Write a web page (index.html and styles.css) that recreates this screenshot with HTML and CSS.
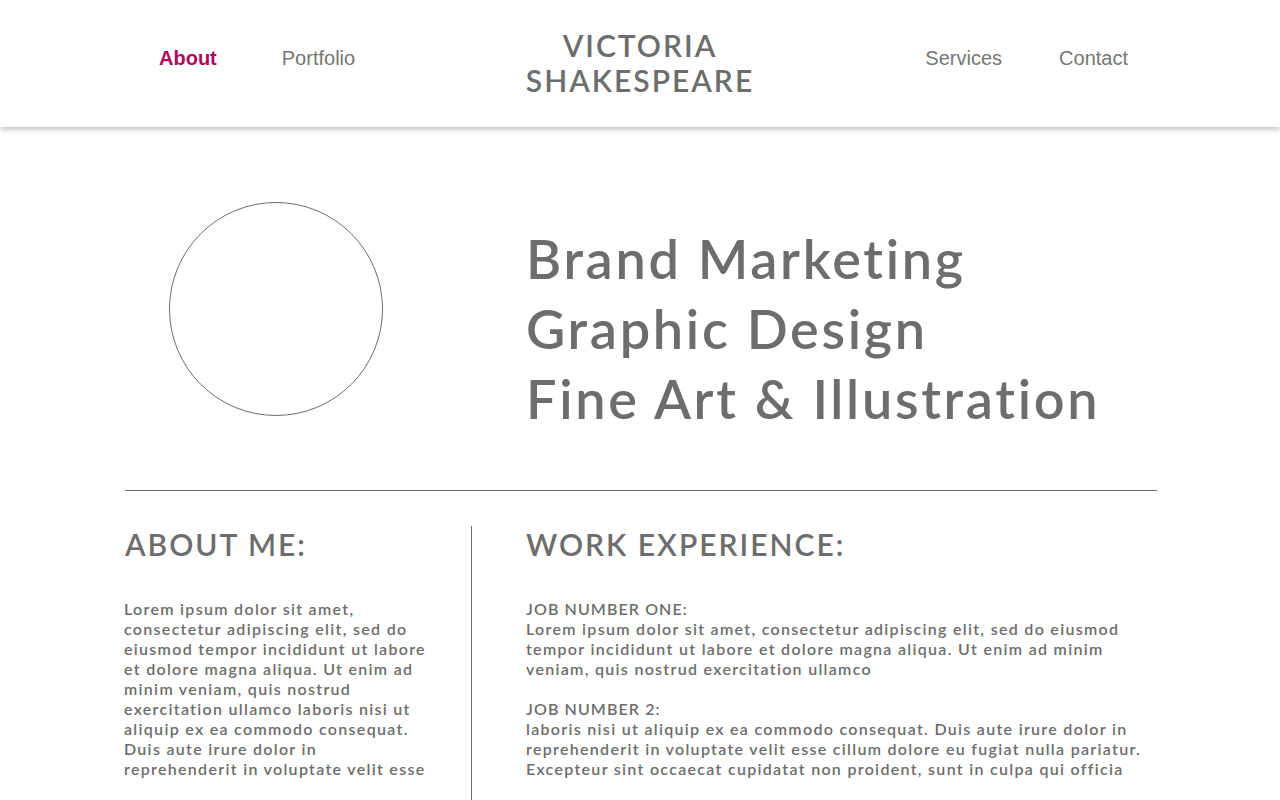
FILE: index.html
```html
<!DOCTYPE html>
<html lang="en">
<head>
<meta charset="utf-8">
<title>Victoria Shakespeare – About</title>
<link rel="stylesheet" href="styles.css">
</head>
<body>
<header class="site-header">
  <nav class="nav nav-left">
    <a class="nav-link active" href="#">About</a>
    <a class="nav-link" href="#">Portfolio</a>
  </nav>
  <div class="logo">VICTORIA<br>SHAKESPEARE</div>
  <nav class="nav nav-right">
    <a class="nav-link" href="#">Services</a>
    <a class="nav-link" href="#">Contact</a>
  </nav>
</header>
<main class="content">
  <section class="hero">
    <div class="hero-photo"><div class="avatar"></div></div>
    <h1 class="hero-title">Brand Marketing<br>Graphic Design<br>Fine Art &amp; Illustration</h1>
  </section>
  <hr class="rule">
  <section class="details">
    <div class="col col-about">
      <h2 class="section-title">ABOUT ME:</h2>
      <p class="body-text">Lorem ipsum dolor sit amet, consectetur adipiscing elit, sed do eiusmod tempor incididunt ut labore et dolore magna aliqua. Ut enim ad minim veniam, quis nostrud exercitation ullamco laboris nisi ut aliquip ex ea commodo consequat. Duis aute irure dolor in reprehenderit in voluptate velit esse</p>
    </div>
    <div class="col col-work">
      <h2 class="section-title">WORK EXPERIENCE:</h2>
      <div class="job">
        <h3 class="job-title">JOB NUMBER ONE:</h3>
        <p class="body-text">Lorem ipsum dolor sit amet, consectetur adipiscing elit, sed do eiusmod tempor incididunt ut labore et dolore magna aliqua. Ut enim ad minim veniam, quis nostrud exercitation ullamco</p>
      </div>
      <div class="job">
        <h3 class="job-title">JOB NUMBER 2:</h3>
        <p class="body-text">laboris nisi ut aliquip ex ea commodo consequat. Duis aute irure dolor in reprehenderit in voluptate velit esse cillum dolore eu fugiat nulla pariatur. Excepteur sint occaecat cupidatat non proident, sunt in culpa qui officia</p>
      </div>
    </div>
  </section>
</main>
</body>
</html>
```

FILE: styles.css
```css
* { box-sizing: border-box; }
html, body { margin: 0; padding: 0; }
body {
  background: #ffffff;
  color: #6d6d6d;
  font-family: "Lato", "Open Sans", sans-serif;
  overflow: hidden;
  height: 800px;
}

.site-header {
  height: 127px;
  background: #fff;
  box-shadow: 0 2px 6px rgba(0, 0, 0, 0.28);
  display: grid;
  grid-template-columns: 1fr auto 1fr;
  align-items: center;
  position: relative;
  z-index: 2;
}
.nav {
  display: flex;
  align-items: center;
  gap: 65px;
  padding-bottom: 10px;
}
.nav-left { padding-left: 159px; }
.nav-right { justify-content: flex-end; padding-right: 152px; gap: 57px; }
.nav-link {
  font-family: "Liberation Sans", Arial, sans-serif;
  font-size: 20px;
  color: #767676;
  text-decoration: none;
}
.nav-link.active {
  color: #b0085a;
  font-weight: 700;
}
.logo {
  text-align: center;
  font-size: 30px;
  line-height: 35px;
  letter-spacing: 2px;
  font-weight: 600;
  color: #6d6d6d;
  padding-bottom: 1px;
}

.content {
  padding: 0 123px 0 125px;
}
.hero {
  display: flex;
  padding-top: 75px;
  height: 363px;
}
.hero-photo {
  width: 401px;
  padding-left: 44px;
}
.avatar {
  width: 214px;
  height: 214px;
  border: 1px solid #6d6d6d;
  border-radius: 50%;
}
.hero-title {
  margin: 22px 0 0;
  font-size: 54px;
  line-height: 70px;
  font-weight: 600;
  letter-spacing: 2.7px;
  color: #6d6d6d;
}

.rule {
  margin: 0;
  border: 0;
  border-top: 1px solid #6d6d6d;
  width: 1032px;
}

.details {
  display: flex;
  margin-top: 35px;
}
.col-about {
  flex: 0 0 347px;
  width: 347px;
  border-right: 1px solid #6d6d6d;
  height: 280px;
  padding-right: 36px;
}
.col-work {
  padding-left: 54px;
  flex: 1;
}
.section-title {
  margin: 0;
  font-size: 30px;
  line-height: 36px;
  font-weight: 600;
  letter-spacing: 2px;
  color: #6d6d6d;
}
.body-text {
  margin: 0;
  font-size: 16px;
  line-height: 20px;
  font-weight: 600;
  letter-spacing: 1.3px;
}
.col-about .body-text { margin-top: 37px; margin-left: -1px; }
.col-work .job:first-of-type { margin-top: 37px; }
.job + .job { margin-top: 20px; }
.job-title {
  margin: 0;
  font-size: 16px;
  line-height: 20px;
  font-weight: 600;
  letter-spacing: 1.1px;
}
```
